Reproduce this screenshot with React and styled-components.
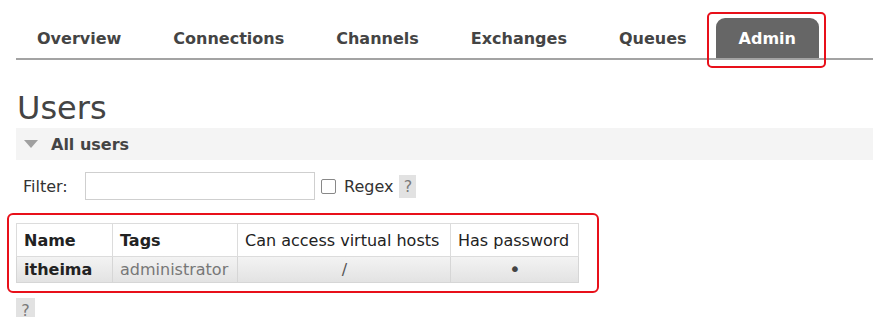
import styled, { createGlobalStyle } from "styled-components";

const GlobalStyle = createGlobalStyle`
  body {
    margin: 0;
    background: #fff;
    font-family: "DejaVu Sans", Verdana, sans-serif;
    color: #484848;
  }
`;

const Page = styled.div`
  width: 873px;
  height: 317px;
  overflow: hidden;
`;

const Nav = styled.nav`
  margin-left: 16px;
  padding-top: 18px;
  border-bottom: 2px solid #a3a3a3;
`;

const TabList = styled.ul`
  display: flex;
  gap: 6px;
  list-style: none;
  margin: 0 0 0 -2px;
  padding: 0;
`;

const Tab = styled.li`
  position: relative;
  height: 40px;
  line-height: 41px;
  padding: 0 23px;
  font-size: 16px;
  font-weight: bold;
  color: ${(p) => (p.$active ? "#fff" : "#444")};
  background: ${(p) => (p.$active ? "#666" : "transparent")};
  border-radius: 9px 9px 0 0;

  ${(p) =>
    p.$marked &&
    `
    &::after {
      content: "";
      position: absolute;
      left: -9px;
      right: -7px;
      top: -6px;
      bottom: -10px;
      border: 2px solid #e8101a;
      border-radius: 5px;
    }
  `}
`;

const Heading = styled.h1`
  margin: 30px 0 0 17px;
  font-size: 32px;
  line-height: 36px;
  font-weight: normal;
  color: #444;
`;

const SectionBar = styled.div`
  display: flex;
  align-items: center;
  gap: 13px;
  height: 32px;
  margin: 2px 0 0 16px;
  padding-left: 8px;
  background: #f4f4f4;
  font-size: 16px;
  font-weight: bold;
  color: #444;
`;

const Arrow = styled.span`
  width: 0;
  height: 0;
  border-left: 7px solid transparent;
  border-right: 7px solid transparent;
  border-top: 8px solid #a0a0a0;
`;

const FilterRow = styled.div`
  display: flex;
  align-items: center;
  margin: 12px 0 0 23px;
  font-size: 16px;
  color: #333;
`;

const Label = styled.span`
  width: 62px;
`;

const TextInput = styled.input`
  box-sizing: border-box;
  width: 230px;
  height: 28px;
  margin: 0;
  border: 1px solid #cfcfcf;
  background: #fff;
`;

const Check = styled.input`
  appearance: none;
  box-sizing: border-box;
  width: 15px;
  height: 15px;
  margin: 0 8px 0 6px;
  border: 1px solid #888;
  border-radius: 2px;
  background: #fff;
`;

const Help = styled.span`
  display: inline-flex;
  align-items: center;
  justify-content: center;
  width: ${(p) => p.$w || 17}px;
  height: ${(p) => p.$h || 23}px;
  margin-left: ${(p) => p.$ml || 0}px;
  background: #e2e2e2;
  color: #7a7a7a;
  font-size: 16px;
`;

const Marked = styled.div`
  width: fit-content;
  margin: 13px 0 0 7px;
  padding: 8px 18px 8px 7px;
  border: 2px solid #e8101a;
  border-radius: 6px;
`;

const Table = styled.table`
  border-collapse: collapse;
  table-layout: fixed;
  width: 562px;
  font-size: 16px;
`;

const Th = styled.th`
  height: 32px;
  padding: 0 6px 0 7px;
  border: 1px solid #dcdcdc;
  background: #fff;
  text-align: left;
  white-space: nowrap;
  color: #222;
  font-weight: ${(p) => (p.$bold ? "bold" : "normal")};
`;

const Row = styled.tr`
  background: linear-gradient(#f3f3f3, #e2e2e2);
`;

const Td = styled.td`
  height: 25px;
  padding: 0 6px 0 7px;
  border: 1px solid #d6d6d6;
  text-align: ${(p) => (p.$center ? "center" : "left")};
  color: ${(p) => p.$color || "#222"};
  font-weight: ${(p) => (p.$bold ? "bold" : "normal")};
  white-space: nowrap;
`;

const Dot = styled.span`
  font-size: 20px;
  line-height: 1;
  color: #444;
`;

const Footer = styled.div`
  margin: 5px 0 0 16px;
`;

const tabs = ["Overview", "Connections", "Channels", "Exchanges", "Queues", "Admin"];

const App = () => {
  return (
    <Page>
      <GlobalStyle />
      <Nav>
        <TabList>
          {tabs.map((t) => (
            <Tab key={t} $active={t === "Admin"} $marked={t === "Admin"}>
              {t}
            </Tab>
          ))}
        </TabList>
      </Nav>
      <Heading>Users</Heading>
      <SectionBar>
        <Arrow />
        All users
      </SectionBar>
      <FilterRow>
        <Label>Filter:</Label>
        <TextInput type="text" />
        <Check type="checkbox" />
        Regex
        <Help $ml={6}>?</Help>
      </FilterRow>
      <Marked>
        <Table>
          <colgroup>
            <col style={{ width: 96 }} />
            <col style={{ width: 125 }} />
            <col style={{ width: 213 }} />
            <col style={{ width: 128 }} />
          </colgroup>
          <thead>
            <tr>
              <Th $bold>Name</Th>
              <Th $bold>Tags</Th>
              <Th>Can access virtual hosts</Th>
              <Th>Has password</Th>
            </tr>
          </thead>
          <tbody>
            <Row>
              <Td $bold>itheima</Td>
              <Td $color="#777">administrator</Td>
              <Td $center $color="#555">/</Td>
              <Td $center>
                <Dot>•</Dot>
              </Td>
            </Row>
          </tbody>
        </Table>
      </Marked>
      <Footer>
        <Help $w={19} $h={24}>?</Help>
      </Footer>
    </Page>
  );
};

export default App;
